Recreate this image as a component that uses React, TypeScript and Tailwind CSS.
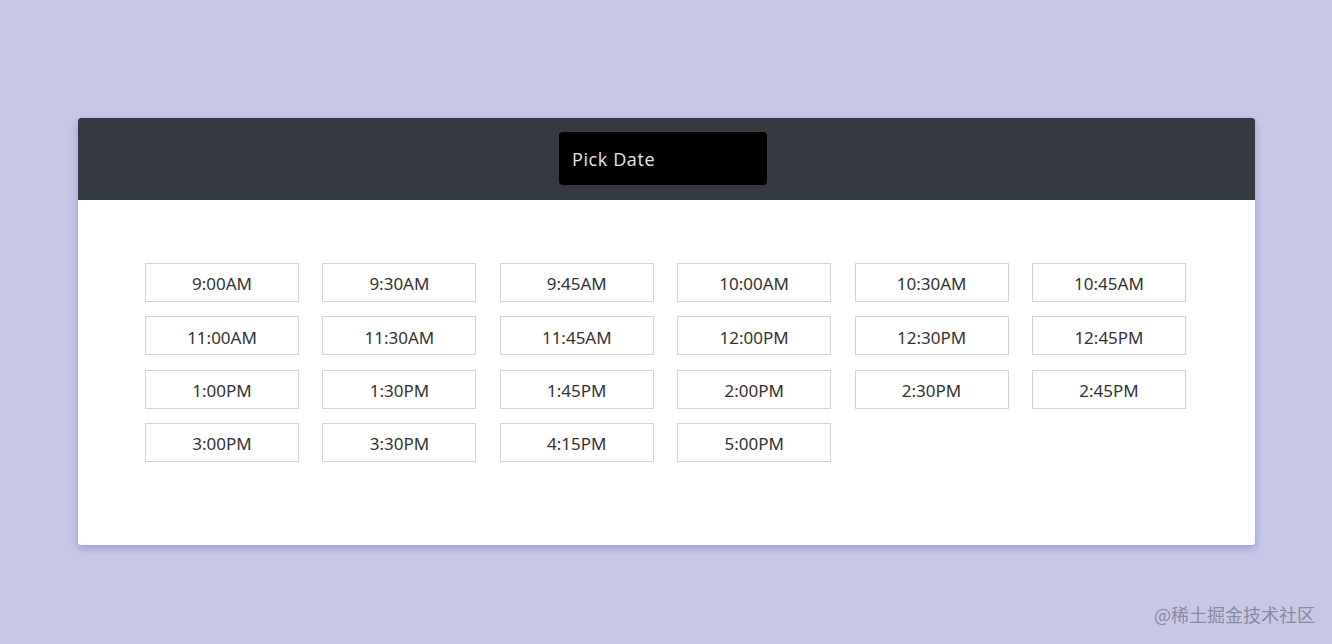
import React from "react";

const times = [
  "9:00AM", "9:30AM", "9:45AM", "10:00AM", "10:30AM", "10:45AM",
  "11:00AM", "11:30AM", "11:45AM", "12:00PM", "12:30PM", "12:45PM",
  "1:00PM", "1:30PM", "1:45PM", "2:00PM", "2:30PM", "2:45PM",
  "3:00PM", "3:30PM", "4:15PM", "5:00PM",
];

const App = () => {
  return (
    <div className="min-h-[644px] bg-[#c8c8e6] flex flex-col font-['Noto_Sans',sans-serif]">
      <div className="pt-[118px] pl-[78px]">
        {/* Card */}
        <div className="w-[1177px] h-[427px] bg-white rounded-[3px] overflow-hidden shadow-[0_3px_8px_rgba(110,110,210,0.55)]">
          {/* Header */}
          <div className="h-[82px] bg-[#343a40] flex justify-center pt-[14px] pr-[7px]">
            <div className="w-[208px] h-[53px] bg-black rounded-[4px] flex items-center px-[13px] pt-[2px] text-[18px] text-[#e6e6e6] font-['Open_Sans',sans-serif] tracking-[0.6px]">
              Pick Date
            </div>
          </div>

          {/* Times */}
          <div className="pt-[63px] pl-[67px] grid grid-cols-[repeat(6,154px)] gap-x-[23.4px] gap-y-[14.3px]">
            {times.map((t) => (
              <button
                key={t}
                className="h-[39px] border border-[#d4d4d4] bg-white text-[17px] text-[#333] flex items-center justify-center pt-[3px]"
              >
                {t}
              </button>
            ))}
          </div>
        </div>
      </div>

      <div className="flex justify-end pr-[17px] pt-[56px]">
        <span className="text-[18px] text-[#8a8aa0] font-['Noto_Sans_CJK_SC',sans-serif]">@稀土掘金技术社区</span>
      </div>
    </div>
  );
};

export default App;
